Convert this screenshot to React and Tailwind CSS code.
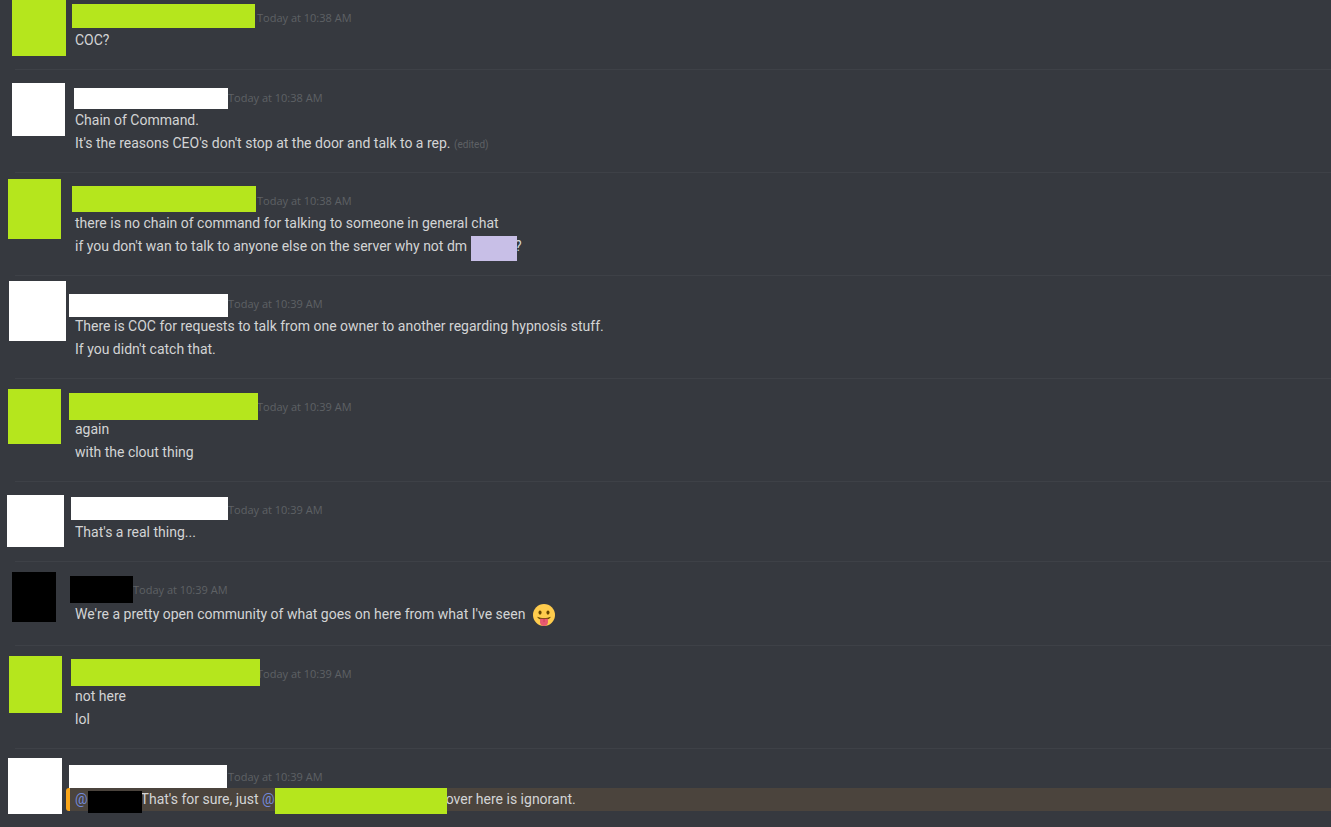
import React from "react";

// Cover blocks for hidden avatars and names
const messages = [
  {
    time: "Today at 10:38 AM",
    avatar: "ml-[12px] w-[54px] h-[56px] bg-[#b5e61d]",
    slot: "w-[182px]",
    cover: "-left-[3px] -top-[5px] w-[183px] h-[24px] bg-[#b5e61d]",
    lines: ["COC?"],
  },
  {
    time: "Today at 10:38 AM",
    avatar: "ml-[12px] mt-[13px] w-[53px] h-[53px] bg-white",
    slot: "w-[153px]",
    cover: "-left-px -top-px w-[154px] h-[21px] bg-white",
    lines: [
      "Chain of Command.",
      <>
        It's the reasons CEO's don't stop at the door and talk to a rep.{" "}
        <span className="text-[10px] leading-none text-[#5e6165]">(edited)</span>
      </>,
    ],
  },
  {
    time: "Today at 10:38 AM",
    avatar: "ml-[8px] mt-[6px] w-[53px] h-[60px] bg-[#b5e61d]",
    slot: "w-[182px]",
    cover: "-left-[3px] -top-[6px] w-[184px] h-[26px] bg-[#b5e61d]",
    lines: [
      "there is no chain of command for talking to someone in general chat",
      <>
        if you don't wan to talk to anyone else on the server why not dm
        <Hidden slot="w-[48px]" cover="left-[4px] top-[1px] w-[46px] h-[25px] bg-[#c8bfe7]" />?
      </>,
    ],
  },
  {
    time: "Today at 10:39 AM",
    avatar: "ml-[9px] mt-[5px] w-[57px] h-[60px] bg-white",
    slot: "w-[153px]",
    cover: "-left-[6px] -top-px w-[159px] h-[23px] bg-white",
    lines: [
      "There is COC for requests to talk from one owner to another regarding hypnosis stuff.",
      "If you didn't catch that.",
    ],
  },
  {
    time: "Today at 10:39 AM",
    avatar: "ml-[8px] mt-[10px] w-[53px] h-[55px] bg-[#b5e61d]",
    slot: "w-[182px]",
    cover: "-left-[6px] -top-[5px] w-[189px] h-[27px] bg-[#b5e61d]",
    lines: ["again", "with the clout thing"],
  },
  {
    time: "Today at 10:39 AM",
    avatar: "ml-[7px] mt-[13px] w-[57px] h-[52px] bg-white",
    slot: "w-[153px]",
    cover: "-left-[4px] -top-[4px] w-[157px] h-[23px] bg-white",
    lines: ["That's a real thing..."],
  },
  {
    time: "Today at 10:39 AM",
    avatar: "ml-[12px] mt-[10px] w-[44px] h-[50px] bg-black",
    slot: "w-[58px]",
    cover: "-left-[5px] -top-[5px] w-[63px] h-[27px] bg-black",
    lines: [
      <span className="flex h-[27px] items-center gap-2">
        We're a pretty open community of what goes on here from what I've seen
        <TongueEmoji />
      </span>,
    ],
  },
  {
    time: "Today at 10:39 AM",
    avatar: "ml-[9px] mt-[10px] w-[53px] h-[57px] bg-[#b5e61d]",
    slot: "w-[182px]",
    cover: "-left-[4px] -top-[6px] w-[189px] h-[27px] bg-[#b5e61d]",
    lines: ["not here", "lol"],
  },
  {
    time: "Today at 10:39 AM",
    avatar: "ml-[8px] mt-[9px] w-[54px] h-[56px] bg-white",
    slot: "w-[153px]",
    cover: "-left-[6px] -top-[3px] w-[158px] h-[23px] bg-white",
    mentioned: true,
    lines: [
      <>
        <a href="#" className="text-[#7289da]">@</a>
        <Hidden slot="w-[53px]" cover="left-0 top-[3px] w-[54px] h-[22px] bg-black" />
        That's for sure, just{" "}
        <a href="#" className="text-[#7289da]">@</a>
        <Hidden slot="w-[171px]" cover="left-0 top-0 w-[172px] h-[26px] bg-[#b5e61d]" />
        over here is ignorant.
      </>,
    ],
  },
];

function Hidden({ slot, cover }) {
  return (
    <span className={`relative inline-block h-[23px] align-top ${slot}`}>
      <span className={`absolute ${cover}`} />
    </span>
  );
}

function TongueEmoji() {
  return (
    <svg viewBox="0 0 36 36" className="h-[22px] w-[22px] shrink-0" role="img" aria-label="stuck out tongue">
      <circle cx="18" cy="18" r="18" fill="#FFCC4D" />
      <ellipse cx="11.5" cy="14" rx="2.5" ry="3.5" fill="#664500" />
      <ellipse cx="24.5" cy="14" rx="2.5" ry="3.5" fill="#664500" />
      <path d="M7 21c3 1.500 7 2 11 2s8-.5 11-2c-1 3-4 5-11 5S8 24 7 21z" fill="#664500" />
      <path d="M11.500 24h13v6c0 3.500-3 6-6.500 6s-6.500-2.500-6.500-6z" fill="#E75A70" />
      <path d="M18 25v4" stroke="#C9405A" strokeWidth="1.500" strokeLinecap="round" />
    </svg>
  );
}

function Message({ message, first }) {
  return (
    <li>
      {!first && <div className="ml-[15px] h-px bg-[#3e4147]" />}
      <div className="flex">
        <div className="w-[66px] shrink-0">
          <div className={message.avatar} />
        </div>
        <div className={`min-w-0 flex-1 pb-[17px] ${first ? "pt-[9px]" : "pt-[19px]"}`}>
          <div className="flex h-5 items-start pl-[9px]">
            <span className={`relative h-5 shrink-0 ${message.slot}`}>
              <span className={`absolute z-10 ${message.cover}`} />
            </span>
            <time className="font-['Open_Sans',sans-serif] text-[11px] leading-[18px] text-[#5e6165]">
              {message.time}
            </time>
          </div>
          {message.lines.map((line, i) => (
            <div
              key={i}
              className={
                message.mentioned
                  ? "rounded-l-[3px] border-l-4 border-[#faa61a] bg-[#4b443d] pl-[5px]"
                  : "pl-[9px]"
              }
            >
              {line}
            </div>
          ))}
        </div>
      </div>
    </li>
  );
}

export default function App() {
  return (
    <main className="min-h-screen overflow-hidden bg-[#36393f] font-['Roboto',sans-serif] text-[14px] leading-[23px] text-[#d3d4d5]">
      <ul>
        {messages.map((message, i) => (
          <Message key={i} message={message} first={i === 0} />
        ))}
      </ul>
    </main>
  );
}
